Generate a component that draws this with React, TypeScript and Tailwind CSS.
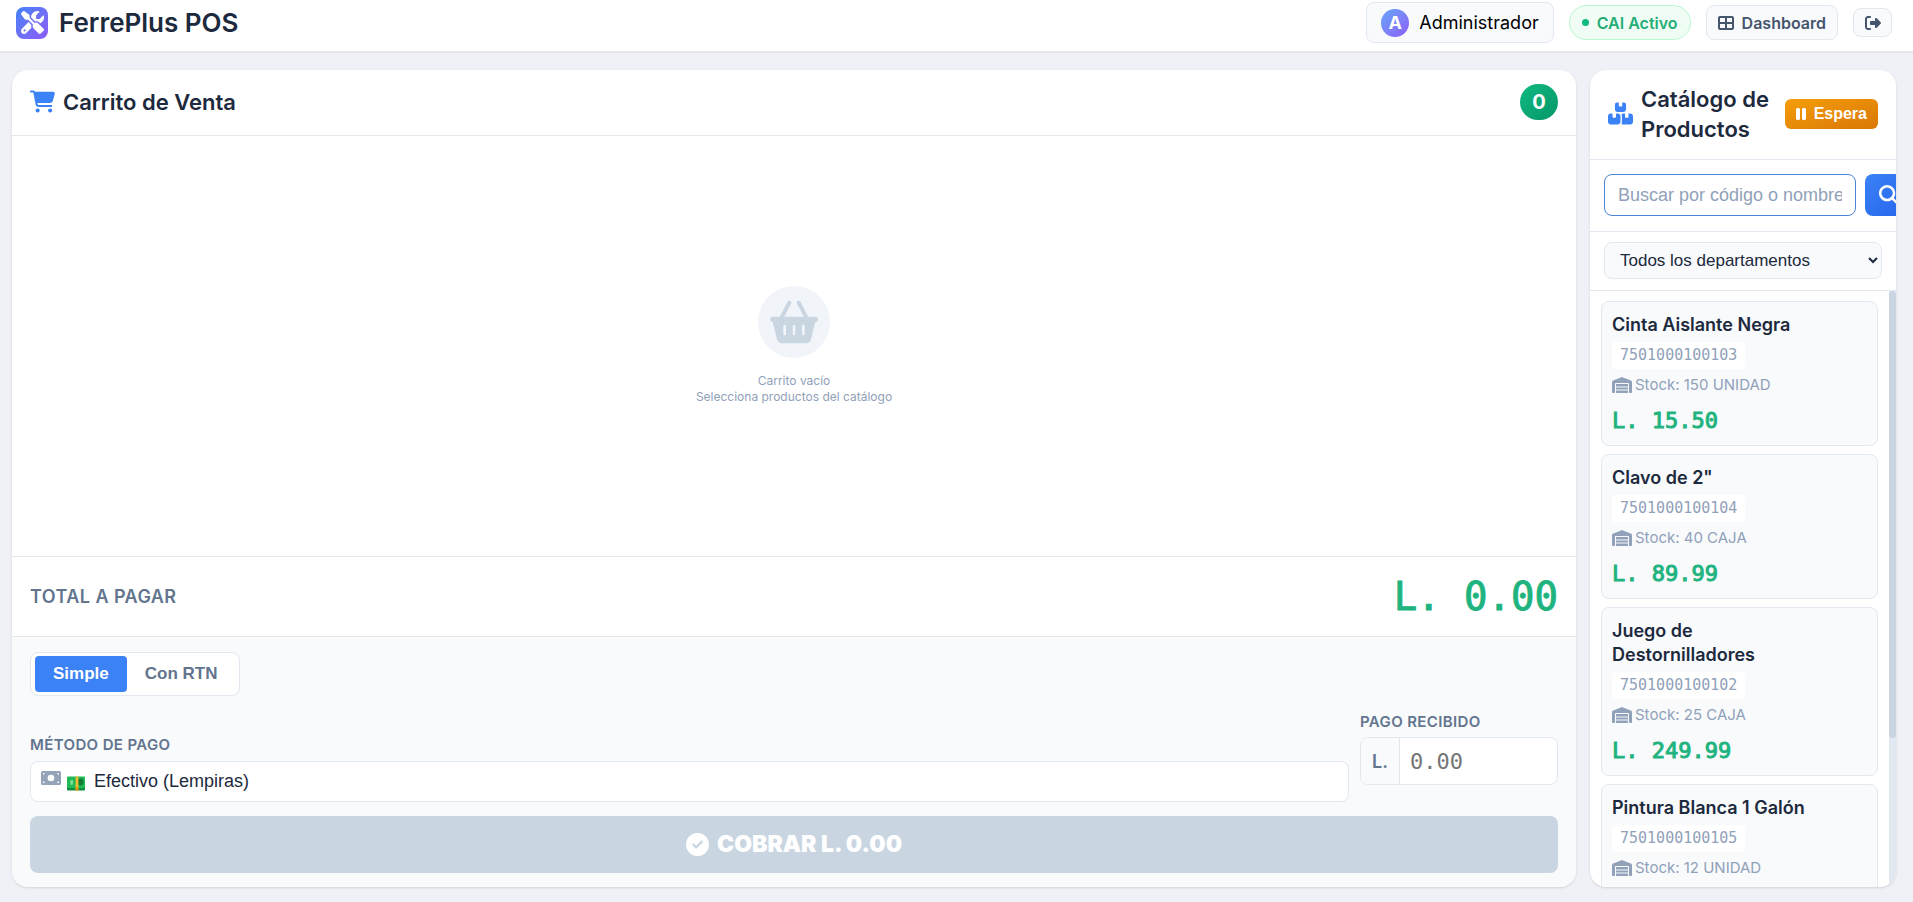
import { useState } from 'react';
import {
    FaBasketShopping,
    FaBoxesStacked,
    FaCartShopping,
    FaCircleCheck,
    FaMagnifyingGlass,
    FaPause,
    FaRightFromBracket,
    FaScrewdriverWrench,
    FaTableCellsLarge,
    FaWarehouse,
} from 'react-icons/fa6';

const products = [
    { name: 'Cinta Aislante Negra', code: '7501000100103', stock: '150 UNIDAD', price: '15.50' },
    { name: 'Clavo de 2"', code: '7501000100104', stock: '40 CAJA', price: '89.99' },
    { name: 'Juego de Destornilladores', code: '7501000100102', stock: '25 CAJA', price: '249.99' },
    { name: 'Pintura Blanca 1 Galón', code: '7501000100105', stock: '12 UNIDAD', price: '450.00' },
];

const MoneyBill = () => (
    <svg viewBox="0 0 20 14" className="h-[14px] w-5" aria-hidden="true">
        <rect width="20" height="14" rx="1.6" fill="#94a3b8" />
        <circle cx="10" cy="7" r="3.3" fill="#fff" />
        <path d="M2 2h1.8A1.8 1.8 0 0 1 2 3.8zM18 2h-1.8A1.8 1.8 0 0 0 18 3.8zM2 12h1.8A1.8 1.8 0 0 0 2 10.2zM18 12h-1.8A1.8 1.8 0 0 1 18 10.2z" fill="#fff" />
    </svg>
);

const Banknotes = () => (
    <svg viewBox="0 0 18 15" className="h-[15px] w-[18px]" aria-hidden="true">
        <rect x="0" y="2" width="18" height="12.5" rx="1" fill="#0c8f3f" />
        <rect x="0" y="0.5" width="18" height="11.5" rx="1" fill="#1fb955" />
        <ellipse cx="13.6" cy="6" rx="3" ry="3.4" fill="#117a37" />
        <rect x="3.4" y="4" width="2.6" height="5" rx="1.2" fill="#7fe09a" />
        <rect x="8.6" y="0.5" width="2.8" height="14" fill="#f5b82e" />
        <rect x="8.6" y="11.5" width="2.8" height="3" fill="#d99412" />
    </svg>
);

const Header = () => (
    <header className="flex items-center justify-between border-b-2 border-gray-200 bg-white pt-[2px] pr-[21px] pb-2 pl-4">
        <div className="flex items-center gap-[11px]">
            <div className="flex size-8 items-center justify-center rounded-lg bg-linear-to-br from-[#3b82f6] to-[#8b5cf6] text-white">
                <FaScrewdriverWrench className="size-[23px]" />
            </div>
            <h1 className="text-[26px] leading-8 font-semibold text-slate-800">FerrePlus POS</h1>
        </div>
        <div className="flex items-center gap-[15px]">
            <button type="button" className="flex h-[41px] items-center gap-[10px] rounded-lg border border-slate-200 bg-slate-50 px-[14px] text-[18px] text-black">
                <span className="flex size-7 items-center justify-center rounded-full bg-linear-to-br from-[#60a5fa] to-[#8b5cf6] font-bold text-white">A</span>
                Administrador
            </button>
            <div className="flex h-[35px] items-center gap-2 rounded-full border border-green-200 bg-green-50 px-3 text-[16px] font-semibold text-[#25ad78]">
                <span className="size-[7px] rounded-full bg-[#10b981]" />
                CAI Activo
            </div>
            <a href="#dashboard" className="flex h-[35px] items-center gap-2 rounded-lg border border-slate-200 bg-slate-50 px-[11px] text-[16px] font-semibold text-slate-600">
                <FaTableCellsLarge className="size-4" />
                Dashboard
            </a>
            <button type="button" aria-label="Salir" className="flex h-[29px] w-[39px] items-center justify-center rounded-lg border border-slate-200 bg-slate-50 text-slate-600">
                <FaRightFromBracket className="size-4" />
            </button>
        </div>
    </header>
);

const Checkout = () => {
    const [mode, setMode] = useState('simple');
    return (
        <div className="bg-slate-50 px-[18px] pt-[15px] pb-[14px]">
            <div className="flex w-fit rounded-lg border border-slate-200 bg-white px-1 py-[3px] font-['Liberation_Sans',sans-serif] text-[17px] font-bold">
                <button
                    type="button"
                    onClick={() => setMode('simple')}
                    className={mode === 'simple' ? 'h-9 rounded bg-[#3b82f6] px-[18px] text-white' : 'h-9 rounded px-[18px] text-slate-500'}
                >
                    Simple
                </button>
                <button
                    type="button"
                    onClick={() => setMode('rtn')}
                    className={mode === 'rtn' ? 'h-9 rounded bg-[#3b82f6] px-[18px] text-white' : 'h-9 rounded px-[18px] text-slate-500'}
                >
                    Con RTN
                </button>
            </div>
            <div className="mt-4 flex items-end gap-[11px]">
                <div className="flex-1">
                    <label htmlFor="metodo" className="block text-[15px] leading-5 font-semibold tracking-wide text-slate-500">
                        MÉTODO DE PAGO
                    </label>
                    <div className="relative mt-[6px]">
                        <div className="pointer-events-none absolute top-[10px] left-[11px] flex items-start gap-[6px]">
                            <MoneyBill />
                            <span className="mt-[5px]">
                                <Banknotes />
                            </span>
                        </div>
                        <select id="metodo" className="h-[41px] w-full appearance-none rounded-lg border border-slate-200 bg-white pl-[63px] font-['Liberation_Sans',sans-serif] text-[18px] text-slate-800">
                            <option>Efectivo (Lempiras)</option>
                        </select>
                    </div>
                </div>
                <div className="mb-[17px] w-[198px]">
                    <label htmlFor="pago" className="block text-[15px] leading-5 font-semibold tracking-wide text-slate-500">
                        PAGO RECIBIDO
                    </label>
                    <div className="mt-[5px] flex h-12 overflow-hidden rounded-lg border border-slate-200 bg-white">
                        <span className="flex items-center border-r border-slate-200 bg-slate-50 px-[11px] text-[18px] font-semibold text-slate-500">L.</span>
                        <input id="pago" placeholder="0.00" className="w-full min-w-0 px-[10px] font-['DejaVu_Sans_Mono',monospace] text-[22px] outline-none placeholder:text-[#757575]" />
                    </div>
                </div>
            </div>
            <button type="button" disabled className="mt-[14px] flex h-[57px] w-full items-center justify-center gap-2 rounded-lg bg-slate-300 text-[23px] font-black text-white">
                <FaCircleCheck className="size-[23px]" />
                COBRAR L. 0.00
            </button>
        </div>
    );
};

const Cart = () => (
    <section className="flex min-w-0 flex-1 flex-col overflow-hidden rounded-2xl bg-white shadow-sm">
        <div className="flex h-[66px] items-center justify-between border-b border-gray-200 px-[18px] pb-[2px]">
            <h2 className="flex items-center gap-2 text-[22px] leading-[30px] font-semibold text-slate-800">
                <FaCartShopping className="size-[25px] text-[#3b82f6]" />
                Carrito de Venta
            </h2>
            <span className="flex h-9 min-w-[38px] items-center justify-center rounded-full bg-linear-to-br from-[#10b981] to-[#059669] text-[20px] font-bold text-white">0</span>
        </div>
        <div className="flex flex-1 flex-col items-center justify-center pb-[2px] text-slate-400">
            <div className="mb-[15px] flex size-[72px] items-center justify-center rounded-full bg-slate-100 text-slate-300">
                <FaBasketShopping className="size-12" />
            </div>
            <p className="text-center text-[12px] leading-4">
                Carrito vacío
                <br />
                Selecciona productos del catálogo
            </p>
        </div>
        <div className="flex h-[81px] items-center justify-between border-y border-gray-200 px-[18px]">
            <span className="text-[18px] font-semibold tracking-wide text-slate-500">TOTAL A PAGAR</span>
            <span className="font-['DejaVu_Sans_Mono',monospace] text-[39px] leading-10 text-[#1fb47f] [-webkit-text-stroke:1px_#1fb47f]">L. 0.00</span>
        </div>
        <Checkout />
    </section>
);

const Catalog = () => (
    <section className="flex w-[306px] flex-col overflow-hidden rounded-2xl bg-white shadow-sm">
        <div className="flex h-[90px] shrink-0 items-center justify-between border-b border-slate-200 px-[18px] pb-[2px]">
            <h2 className="flex items-center gap-2 text-[22px] leading-[30px] font-semibold text-slate-800">
                <FaBoxesStacked className="size-[25px] shrink-0 text-[#3b82f6]" />
                <span className="w-[130px]">Catálogo de Productos</span>
            </h2>
            <button
                type="button"
                className="flex h-[30px] shrink-0 items-center gap-2 rounded-md bg-linear-to-br from-[#f59e0b] to-[#d97706] px-[11px] font-['Liberation_Sans',sans-serif] text-[16px] font-bold text-white"
            >
                <FaPause className="h-4 w-[10px]" />
                Espera
            </button>
        </div>
        <div className="flex shrink-0 gap-[9px] border-b border-slate-200 px-[14px] pt-[14px] pb-[15px]">
            <input
                autoFocus
                aria-label="Buscar producto"
                placeholder="Buscar por código o nombre..."
                className="h-[42px] w-[252px] shrink-0 rounded-lg border border-[#4a86d8] bg-white px-[13px] font-['Liberation_Sans',sans-serif] text-[18px] outline-none placeholder:text-slate-400"
            />
            <button type="button" aria-label="Buscar" className="flex h-[42px] w-12 shrink-0 items-center justify-center rounded-lg bg-linear-to-br from-[#3b82f6] to-[#2563eb] text-white">
                <FaMagnifyingGlass className="size-5" />
            </button>
        </div>
        <div className="shrink-0 border-b border-slate-200 px-[14px] pt-[10px] pb-[11px]">
            <select aria-label="Departamento" className="h-[37px] w-full rounded-lg border border-slate-200 bg-slate-50 px-[11px] font-['Liberation_Sans',sans-serif] text-[17px] text-slate-800">
                <option>Todos los departamentos</option>
            </select>
        </div>
        <div className="flex min-h-0 flex-1">
            <ul className="flex min-w-0 flex-1 flex-col gap-2 overflow-y-auto px-[11px] py-[10px] [scrollbar-width:none]">
                {products.map((product) => (
                    <li key={product.code} className="shrink-0 rounded-lg border border-slate-200 bg-slate-50 px-[10px] pt-[11px] pb-[9px]">
                        <h3 className="w-[220px] text-[18px] leading-6 font-semibold text-slate-800">{product.name}</h3>
                        <div className="mt-[5px] w-fit rounded bg-white px-2 font-['DejaVu_Sans_Mono',monospace] text-[15px] leading-[27px] text-slate-400">{product.code}</div>
                        <div className="mt-[5px] flex items-center gap-[3px] text-[15px] leading-[22px] text-slate-400">
                            <FaWarehouse className="h-4 w-5" />
                            Stock: {product.stock}
                        </div>
                        <div className="mt-[10px] font-['DejaVu_Sans_Mono',monospace] text-[22px] leading-[30px] text-[#1fb47f] [-webkit-text-stroke:1px_#1fb47f]">L. {product.price}</div>
                    </li>
                ))}
            </ul>
            <div className="w-[7px] bg-slate-200">
                <div className="h-3/4 rounded-full bg-slate-300" />
            </div>
        </div>
    </section>
);

const App = () => {
    return (
        <div className="flex h-screen flex-col bg-[#eff1f7] font-['Inter',sans-serif]">
            <Header />
            <main className="flex min-h-0 flex-1 gap-[14px] pt-[17px] pr-[17px] pb-[15px] pl-3">
                <Cart />
                <Catalog />
            </main>
        </div>
    );
};

export default App;
